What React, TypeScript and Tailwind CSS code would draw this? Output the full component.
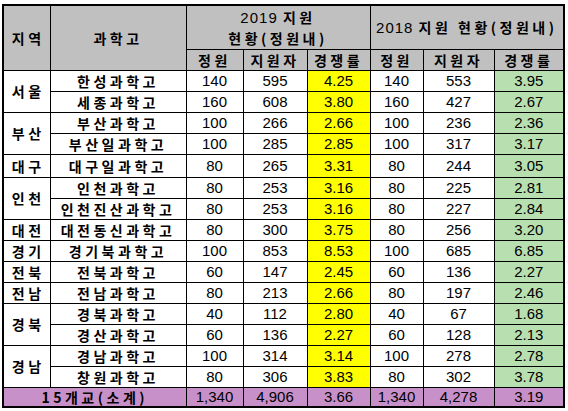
import React from 'react';

type Row = {
  region?: string;
  span?: number;
  school: string;
  a: string[];
  b: string[];
};

const rows: Row[] = [
  { region: '서울', span: 2, school: '한성과학고', a: ['140', '595', '4.25'], b: ['140', '553', '3.95'] },
  { school: '세종과학고', a: ['160', '608', '3.80'], b: ['160', '427', '2.67'] },
  { region: '부산', span: 2, school: '부산과학고', a: ['100', '266', '2.66'], b: ['100', '236', '2.36'] },
  { school: '부산일과학고', a: ['100', '285', '2.85'], b: ['100', '317', '3.17'] },
  { region: '대구', span: 1, school: '대구일과학고', a: ['80', '265', '3.31'], b: ['80', '244', '3.05'] },
  { region: '인천', span: 2, school: '인천과학고', a: ['80', '253', '3.16'], b: ['80', '225', '2.81'] },
  { school: '인천진산과학고', a: ['80', '253', '3.16'], b: ['80', '227', '2.84'] },
  { region: '대전', span: 1, school: '대전동신과학고', a: ['80', '300', '3.75'], b: ['80', '256', '3.20'] },
  { region: '경기', span: 1, school: '경기북과학고', a: ['100', '853', '8.53'], b: ['100', '685', '6.85'] },
  { region: '전북', span: 1, school: '전북과학고', a: ['60', '147', '2.45'], b: ['60', '136', '2.27'] },
  { region: '전남', span: 1, school: '전남과학고', a: ['80', '213', '2.66'], b: ['80', '197', '2.46'] },
  { region: '경북', span: 2, school: '경북과학고', a: ['40', '112', '2.80'], b: ['40', '67', '1.68'] },
  { school: '경산과학고', a: ['60', '136', '2.27'], b: ['60', '128', '2.13'] },
  { region: '경남', span: 2, school: '경남과학고', a: ['100', '314', '3.14'], b: ['100', '278', '2.78'] },
  { school: '창원과학고', a: ['80', '306', '3.83'], b: ['80', '302', '3.78'] },
];

const ko = "font-['Noto_Sans_CJK_KR',sans-serif] font-bold text-[14px] tracking-[3.5px]";
const num = "font-['Liberation_Sans',Arial,sans-serif] text-[15px]";
const cell = 'border border-black text-center p-0 leading-none';

export default function App() {
  return (
    <div className="bg-white w-[568px] h-[411px] pt-[4px] pl-[2px]">
      <table className="table-fixed border-collapse border-2 border-black w-[561px] text-black">
        <colgroup>
          <col className="w-[47px]" />
          <col className="w-[136px]" />
          <col className="w-[57px]" />
          <col className="w-[64px]" />
          <col className="w-[63px]" />
          <col className="w-[53px]" />
          <col className="w-[71px]" />
          <col className="w-[70px]" />
        </colgroup>
        <thead>
          <tr className="h-[44px] bg-[#c0c0c0]">
            <th rowSpan={2} className={`${cell} ${ko} pl-[3px]`}>지역</th>
            <th rowSpan={2} className={`${cell} ${ko}`}>과학고</th>
            <th colSpan={3} className={`${cell} font-normal`}>
              <div className="flex flex-col items-center gap-[6px]">
                <span className="font-['Liberation_Sans',sans-serif] text-[15px] tracking-[1px]">
                  2019 <span className={ko}>지원</span>
                </span>
                <span className={`${ko} tracking-[2px]`}>현황(정원내)</span>
              </div>
            </th>
            <th colSpan={3} className={`${cell} font-normal`}>
              <span className="font-['Liberation_Sans',sans-serif] text-[15px] tracking-[1px]">
                2018 <span className={`${ko} tracking-[2px]`}>지원 현황(정원내)</span>
              </span>
            </th>
          </tr>
          <tr className="h-[21px] bg-[#c0c0c0]">
            {['정원', '지원자', '경쟁률', '정원', '지원자', '경쟁률'].map((h, i) => (
              <th key={i} className={`${cell} ${ko}`}>{h}</th>
            ))}
          </tr>
        </thead>
        <tbody>
          {rows.map((r, i) => (
            <tr key={i} className={i === 4 ? 'h-[23px]' : 'h-[21px]'}>
              {r.region && (
                <td rowSpan={r.span} className={`${cell} ${ko} pl-[3px]`}>{r.region}</td>
              )}
              <td className={`${cell} ${ko}`}>{r.school}</td>
              <td className={`${cell} ${num}`}>{r.a[0]}</td>
              <td className={`${cell} ${num}`}>{r.a[1]}</td>
              <td className={`${cell} ${num} bg-[#ffff00]`}>{r.a[2]}</td>
              <td className={`${cell} ${num}`}>{r.b[0]}</td>
              <td className={`${cell} ${num}`}>{r.b[1]}</td>
              <td className={`${cell} ${num} bg-[#b8dfb0]`}>{r.b[2]}</td>
            </tr>
          ))}
          <tr className="h-[20px] bg-[#c890c8]">
            <td colSpan={2} className={`${cell} ${ko} tracking-[1px]`}>15개교(소계)</td>
            <td className={`${cell} ${num}`}>1,340</td>
            <td className={`${cell} ${num}`}>4,906</td>
            <td className={`${cell} ${num}`}>3.66</td>
            <td className={`${cell} ${num}`}>1,340</td>
            <td className={`${cell} ${num}`}>4,278</td>
            <td className={`${cell} ${num}`}>3.19</td>
          </tr>
        </tbody>
      </table>
    </div>
  );
}
